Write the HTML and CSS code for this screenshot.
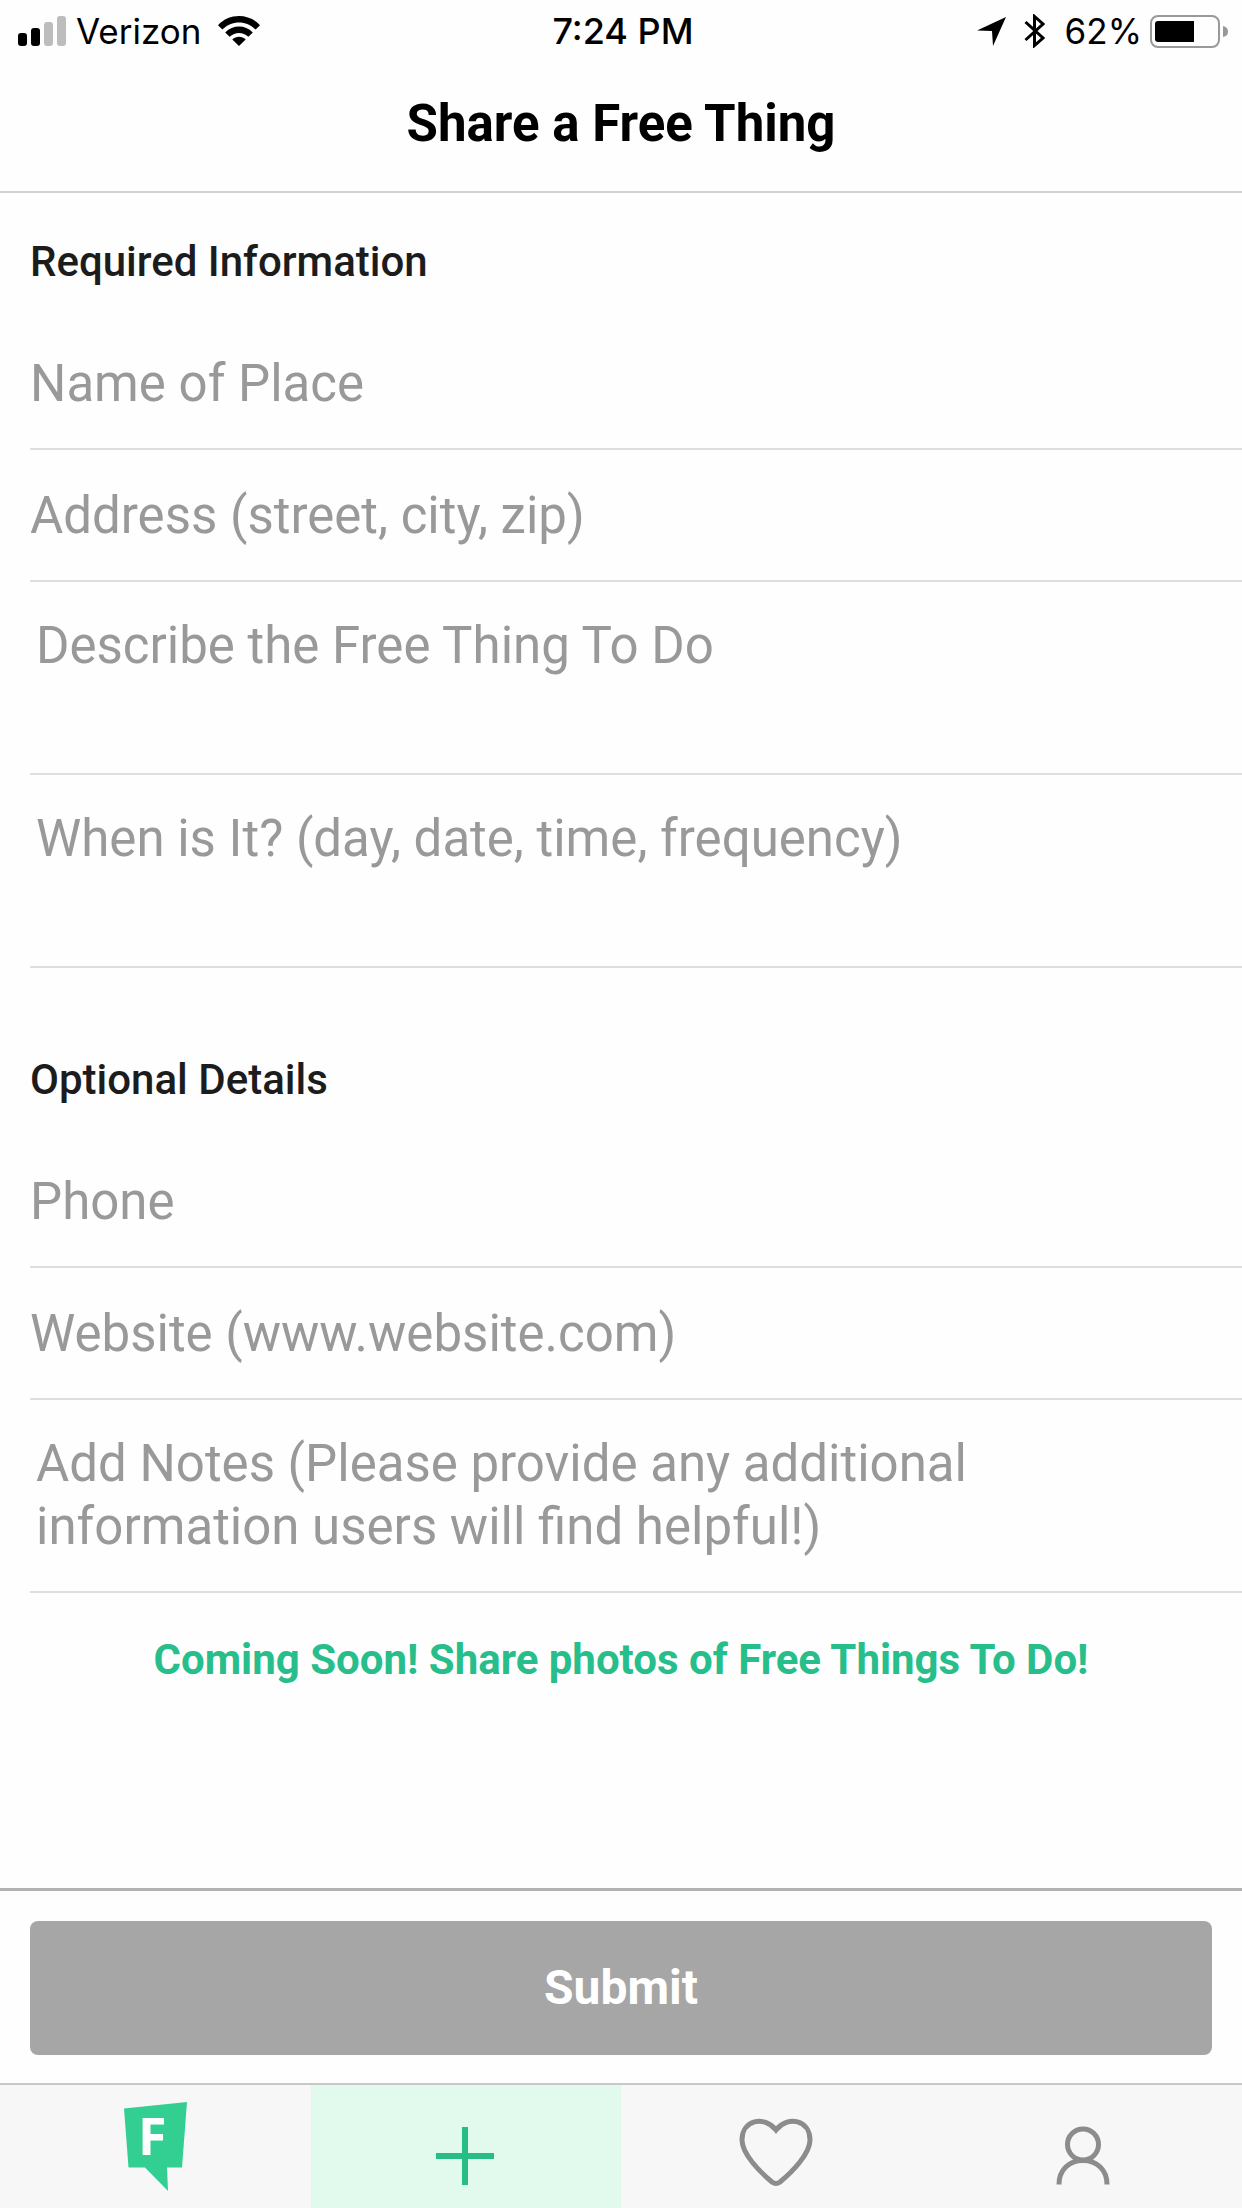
FILE: index.html
```html
<!DOCTYPE html>
<html lang="en">
<head>
<meta charset="utf-8">
<meta name="viewport" content="width=device-width, initial-scale=1">
<title>Share a Free Thing</title>
<link rel="stylesheet" href="styles.css">
</head>
<body>
<div class="status">
  <div class="status-left">
    <svg class="signal" width="48" height="30" viewBox="0 0 48 30" aria-hidden="true">
      <rect x="0" y="17" width="9" height="13" rx="3"/>
      <rect x="13" y="12" width="9" height="18" rx="3"/>
      <rect class="dim" x="26" y="6" width="9" height="24" rx="3"/>
      <rect class="dim" x="39" y="0" width="9" height="30" rx="3"/>
    </svg>
    <span class="carrier">Verizon</span>
    <svg class="wifi" width="42" height="30" viewBox="0 0 42 30" aria-hidden="true">
      <path d="M0 9.2C11-3 31-3 42 9.2L37.600 13.600C28.500 4 13.500 4 4.400 13.600Z"/>
      <path d="M7.200 16.400C15 8.500 27 8.500 34.800 16.400L30.400 20.800C25 15.600 17 15.600 11.600 20.800Z"/>
      <path d="M14.300 23.400C18 20 24 20 27.700 23.400L21 30Z"/>
    </svg>
  </div>
  <span class="time">7:24 PM</span>
  <div class="status-right">
    <svg width="29" height="29" viewBox="0 0 29 29" aria-hidden="true"><path d="M29 0L16 29L15 14L0 13.500Z"/></svg>
    <svg class="bluetooth" width="21" height="34" viewBox="0 0 21 34" aria-hidden="true"><path d="M1.500 8L19 24L10.500 31.500V2.500L19 10L1.500 26"/></svg>
    <span class="percent">62%</span>
    <svg class="battery" width="78" height="33" viewBox="0 0 78 33" aria-hidden="true">
      <rect class="shell" x="1" y="1" width="68" height="31" rx="7"/>
      <path d="M8 6H44V27H8Q5 27 5 24V9Q5 6 8 6Z"/>
      <path class="nub" d="M73 11Q78 12 78 16.500Q78 21 73 22Z"/>
    </svg>
  </div>
</div>
<header class="header"><h1>Share a Free Thing</h1></header>
<form class="form">
  <main class="fields">
    <section>
      <h2>Required Information</h2>
      <input class="field" type="text" placeholder="Name of Place" aria-label="Name of Place">
      <input class="field" type="text" placeholder="Address (street, city, zip)" aria-label="Address (street, city, zip)">
      <textarea class="field area" rows="2" placeholder="Describe the Free Thing To Do" aria-label="Describe the Free Thing To Do"></textarea>
      <textarea class="field area" rows="2" placeholder="When is It? (day, date, time, frequency)" aria-label="When is It? (day, date, time, frequency)"></textarea>
    </section>
    <section>
      <h2>Optional Details</h2>
      <input class="field" type="tel" placeholder="Phone" aria-label="Phone">
      <input class="field" type="text" placeholder="Website (www.website.com)" aria-label="Website (www.website.com)">
      <textarea class="field area notes" rows="2" placeholder="Add Notes (Please provide any additional information users will find helpful!)" aria-label="Add Notes (Please provide any additional information users will find helpful!)"></textarea>
    </section>
    <p class="soon">Coming Soon! Share photos of Free Things To Do!</p>
  </main>
  <div class="actions"><button class="submit" type="submit">Submit</button></div>
</form>
<nav class="tabs">
  <a class="tab" href="#home" aria-label="Home">
    <svg width="90" height="92" viewBox="0 0 90 92"><path class="bubble" d="M14 8.500L77 2L72 67.500H57L58 91L35 67.500H18.500Z"/><text class="letter" x="28" y="55">F</text></svg>
  </a>
  <a class="tab active" href="#share" aria-label="Share" aria-current="page">
    <svg class="plus" width="90" height="92" viewBox="0 0 90 92"><path d="M44 27V85M15 56H73"/></svg>
  </a>
  <a class="tab" href="#favorites" aria-label="Favorites">
    <svg class="line" width="90" height="92" viewBox="0 0 90 92"><path d="M45 30C33 15 11 20 11 40C11 54 29 72 41 82Q45 85 49 82C61 72 79 54 79 40C79 20 57 15 45 30Z"/></svg>
  </a>
  <a class="tab" href="#profile" aria-label="Profile">
    <svg class="line" width="90" height="92" viewBox="0 0 90 92"><circle cx="41" cy="44.500" r="15.500"/><path d="M17 84.500C17 70 27 60.500 41 60.500S65 70 65 84.500"/></svg>
  </a>
</nav>
</body>
</html>
```
FILE: styles.css
```css
* {
  box-sizing: border-box;
}

body {
  margin: 0;
  min-height: 100vh;
  display: flex;
  flex-direction: column;
  background: #fefefe;
  color: #000;
  font-family: Roboto, "Liberation Sans", sans-serif;
}

svg {
  display: block;
  flex: none;
}

.status {
  display: grid;
  grid-template-columns: 1fr auto 1fr;
  align-items: center;
  height: 62px;
  padding: 0 14px 0 18px;
  font: 400 35px/60px Inter, "Liberation Sans", sans-serif;
}

.status-left,
.status-right {
  display: flex;
  align-items: center;
}

.status-right {
  justify-content: flex-end;
}

.dim {
  fill: #bdbdbd;
}

.carrier {
  margin: 0 17px 0 10px;
}

.time {
  font-size: 36px;
  font-weight: 500;
}

.bluetooth {
  margin: 0 20px 0 18px;
  fill: none;
  stroke: #000;
  stroke-width: 3;
}

.percent {
  margin-right: 8px;
}

.shell {
  fill: none;
  stroke: #999;
  stroke-width: 2;
}

.nub {
  fill: #999;
}

.header {
  padding: 32px 30px 37px;
  border-bottom: 2px solid #d2d2d2;
  text-align: center;
}

h1 {
  margin: 0;
  font-size: 51px;
  line-height: 60px;
  font-weight: 700;
}

.form {
  flex: 1;
  display: flex;
  flex-direction: column;
}

.fields {
  flex: 1;
}

section {
  padding-left: 30px;
}

section + section {
  margin-top: 43px;
}

h2 {
  margin: 0;
  padding: 45px 0 32px;
  color: #1c1c1c;
  font-size: 42px;
  line-height: 48px;
  font-weight: 500;
}

.field {
  display: block;
  width: 100%;
  height: 132px;
  margin: 0;
  padding: 0;
  border: 0;
  border-bottom: 2px solid #dedede;
  border-radius: 0;
  background: transparent;
  color: #1c1c1c;
  font: 400 51px/63px Roboto, "Liberation Sans", sans-serif;
  outline: 0;
}

.area {
  height: 193px;
  padding: 32px 6px;
  resize: none;
  overflow: hidden;
}

.notes {
  padding-right: 200px;
}

.field::placeholder {
  color: #999;
  opacity: 1;
}

.soon {
  margin: 0;
  padding: 43px 30px;
  color: #27be8b;
  font-size: 42px;
  line-height: 48px;
  font-weight: 700;
  text-align: center;
}

.actions {
  padding: 30px 30px 28px;
  border-top: 3px solid #b2b2b2;
}

.submit {
  display: block;
  width: 100%;
  height: 134px;
  padding: 0;
  border: 0;
  border-radius: 8px;
  background: #a6a6a6;
  color: #fff;
  font: 700 48px/60px Roboto, "Liberation Sans", sans-serif;
}

.tabs {
  display: grid;
  grid-template-columns: repeat(4, 1fr);
  border-top: 2px solid #c8c8c8;
  background: #f7f7f7;
}

.tab {
  display: flex;
  justify-content: center;
  padding: 15px 0 16px;
}

.active {
  background: #e2f9ed;
}

.bubble {
  fill: #33cf92;
}

.letter {
  fill: #fff;
  font: 700 52px "Open Sans", sans-serif;
}

.plus {
  fill: none;
  stroke: #27be85;
  stroke-width: 6;
}

.line {
  fill: none;
  stroke: #8c8c8c;
  stroke-width: 5;
}
```
